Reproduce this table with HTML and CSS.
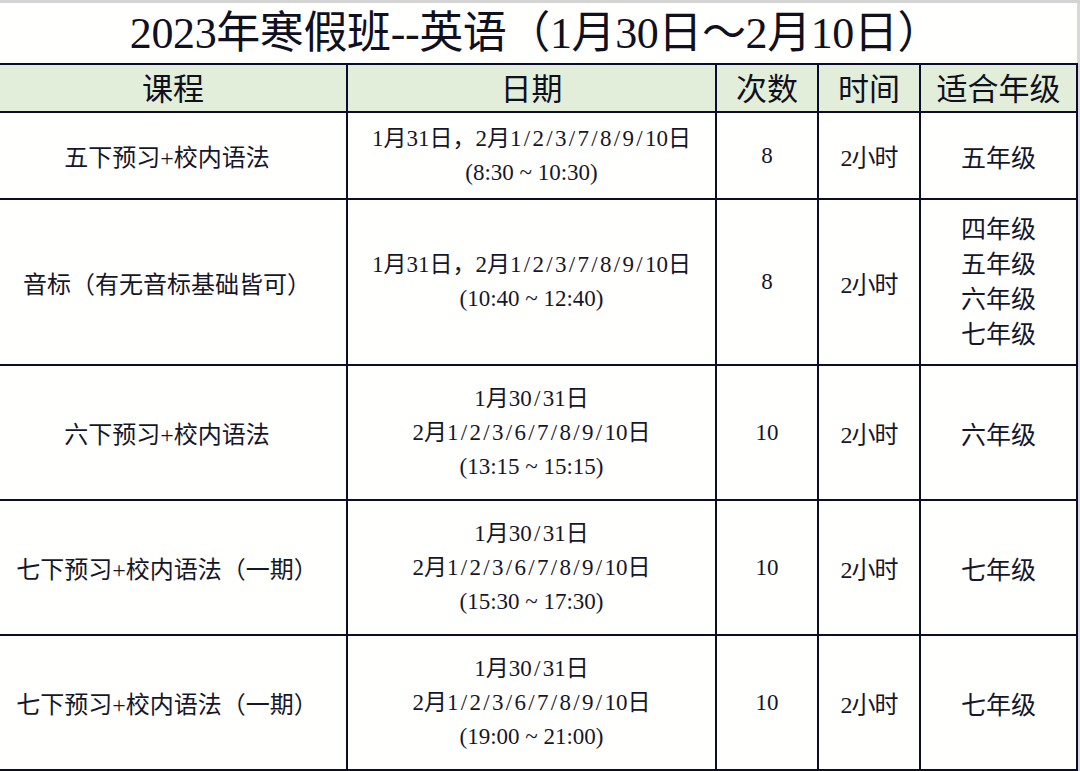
FILE: index.html
```html
<!DOCTYPE html>
<html lang="zh-CN">
<head>
<meta charset="utf-8">
<title>2023年寒假班--英语</title>
<link rel="stylesheet" href="styles.css">
</head>
<body>
<div class="page">
  <div class="topbar"></div>
  <div class="sheet">
    <h1 class="title">2023年寒假班--英语（1月30日～2月10日）</h1>
    <table class="schedule">
      <colgroup>
        <col class="c1"><col class="c2"><col class="c3"><col class="c4"><col class="c5">
      </colgroup>
      <thead>
        <tr class="head">
          <th>课程</th><th>日期</th><th>次数</th><th>时间</th><th>适合年级</th>
        </tr>
      </thead>
      <tbody>
        <tr class="r1">
          <td class="course">五下预习+校内语法</td>
          <td class="date"><div>1月31日，2月1<span class="sl">/</span>2<span class="sl">/</span>3<span class="sl">/</span>7<span class="sl">/</span>8<span class="sl">/</span>9<span class="sl">/</span>10日</div><div>(8:30 ~ 10:30)</div></td>
          <td class="num">8</td>
          <td class="dur">2小时</td>
          <td class="grade">五年级</td>
        </tr>
        <tr class="r2">
          <td class="course">音标（有无音标基础皆可）</td>
          <td class="date"><div>1月31日，2月1<span class="sl">/</span>2<span class="sl">/</span>3<span class="sl">/</span>7<span class="sl">/</span>8<span class="sl">/</span>9<span class="sl">/</span>10日</div><div>(10:40 ~ 12:40)</div></td>
          <td class="num">8</td>
          <td class="dur">2小时</td>
          <td class="grade multi"><div>四年级</div><div>五年级</div><div>六年级</div><div>七年级</div></td>
        </tr>
        <tr class="r3">
          <td class="course">六下预习+校内语法</td>
          <td class="date"><div>1月30<span class="sl">/</span>31日</div><div>2月1<span class="sl">/</span>2<span class="sl">/</span>3<span class="sl">/</span>6<span class="sl">/</span>7<span class="sl">/</span>8<span class="sl">/</span>9<span class="sl">/</span>10日</div><div>(13:15 ~ 15:15)</div></td>
          <td class="num">10</td>
          <td class="dur">2小时</td>
          <td class="grade">六年级</td>
        </tr>
        <tr class="r3">
          <td class="course">七下预习+校内语法（一期）</td>
          <td class="date"><div>1月30<span class="sl">/</span>31日</div><div>2月1<span class="sl">/</span>2<span class="sl">/</span>3<span class="sl">/</span>6<span class="sl">/</span>7<span class="sl">/</span>8<span class="sl">/</span>9<span class="sl">/</span>10日</div><div>(15:30 ~ 17:30)</div></td>
          <td class="num">10</td>
          <td class="dur">2小时</td>
          <td class="grade">七年级</td>
        </tr>
        <tr class="r3">
          <td class="course">七下预习+校内语法（一期）</td>
          <td class="date"><div>1月30<span class="sl">/</span>31日</div><div>2月1<span class="sl">/</span>2<span class="sl">/</span>3<span class="sl">/</span>6<span class="sl">/</span>7<span class="sl">/</span>8<span class="sl">/</span>9<span class="sl">/</span>10日</div><div>(19:00 ~ 21:00)</div></td>
          <td class="num">10</td>
          <td class="dur">2小时</td>
          <td class="grade">七年级</td>
        </tr>
      </tbody>
    </table>
  </div>
</div>
</body>
</html>
```

FILE: styles.css
```css
html, body {
  margin: 0;
  padding: 0;
  background: #d8d8d8;
}

body {
  width: 1080px;
  height: 771px;
  overflow: hidden;
  font-family: "Liberation Serif", "Noto Sans CJK SC", serif;
  color: #16162a;
}

.page {
  width: 1080px;
  height: 771px;
  display: flex;
  flex-direction: column;
}

.topbar {
  height: 3px;
  background: #d4d4d4;
  flex: none;
}

.sheet {
  width: 1077px;
  flex: 1;
  background: #fffffd;
  display: flex;
  flex-direction: column;
}

.title {
  margin: 0;
  height: 60px;
  flex: none;
  display: flex;
  align-items: center;
  justify-content: center;
  padding-right: 6px;
  padding-top: 2px;
  box-sizing: border-box;
  font-size: 44px;
  font-weight: normal;
  line-height: 1;
  color: #10101e;
  letter-spacing: -0.4px;
}

.schedule {
  border-collapse: collapse;
  table-layout: fixed;
  width: 1077px;
}

.c1 { width: 347px; }
.c2 { width: 369px; }
.c3 { width: 102px; }
.c4 { width: 102px; }
.c5 { width: 157px; }

.schedule th,
.schedule td {
  border: 2px solid #0c0c2c;
  text-align: center;
  vertical-align: middle;
  padding: 0;
}

.schedule th:first-child,
.schedule td:first-child {
  border-left: none;
}

.head { height: 48px; }
.r1 { height: 87px; }
.r2 { height: 166px; }
.r3 { height: 135px; }

.head th {
  background: #e2eed9;
  font-size: 31px;
  font-weight: normal;
  line-height: 1;
  color: #10101e;
  padding-top: 2px;
}

.course {
  font-size: 24px;
  line-height: 30px;
  padding-top: 5px !important;
  padding-right: 12px !important;
}

.date {
  font-size: 23px;
  line-height: 34px;
}

.sl {
  margin: 0 2.3px;
}

.num {
  font-size: 23px;
}

.dur {
  font-size: 24px;
  letter-spacing: -1px;
}

.grade {
  font-size: 25px;
}

.grade.multi {
  line-height: 35px;
}
```
